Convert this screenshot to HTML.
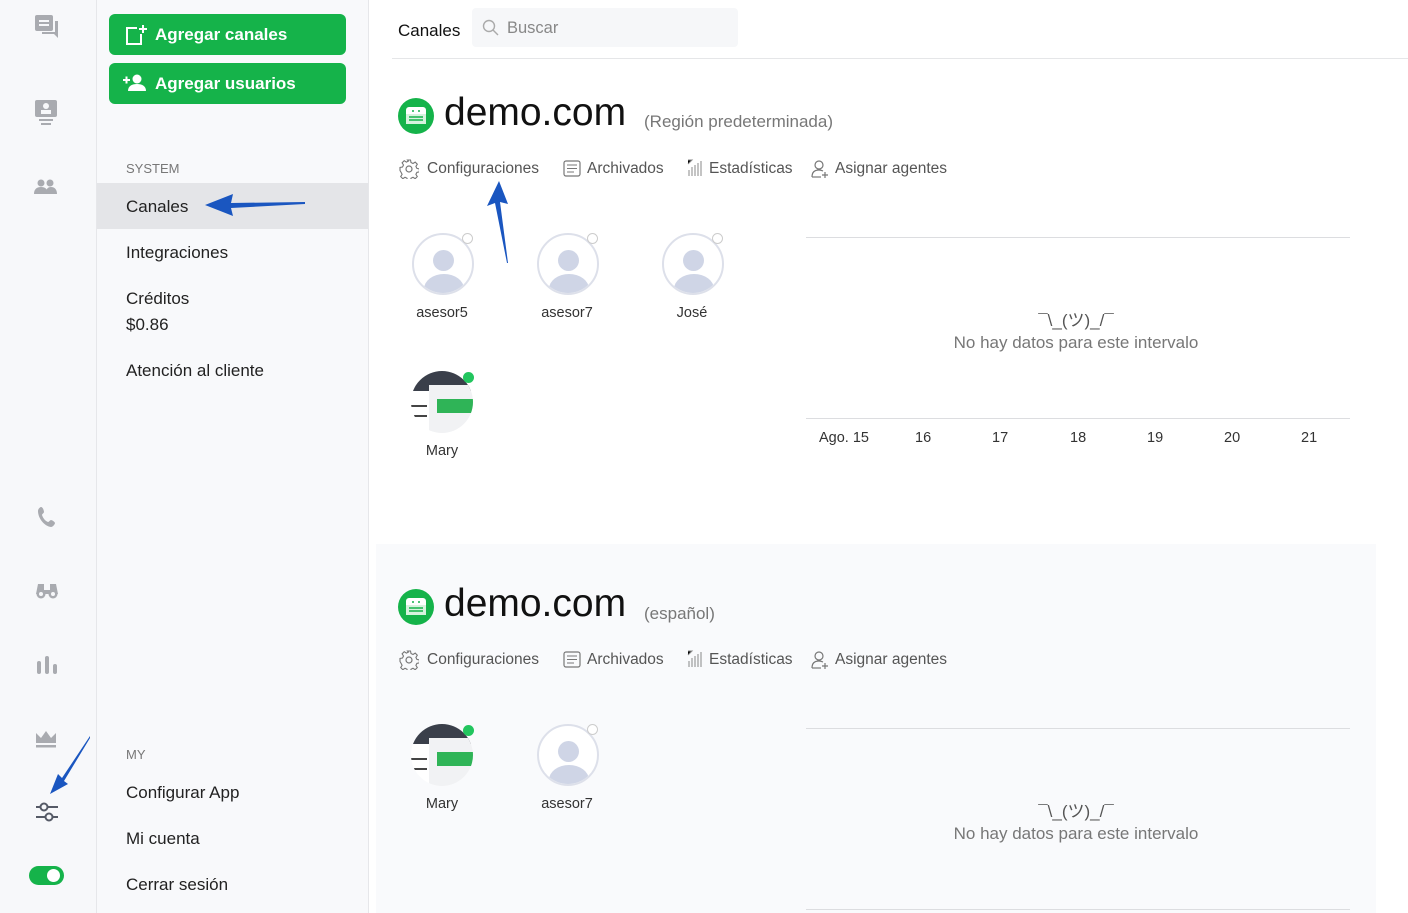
<!DOCTYPE html>
<html><head><meta charset="utf-8"><style>
*{box-sizing:border-box;margin:0;padding:0}
body{width:1408px;height:913px;overflow:hidden;background:#fff;font-family:"Liberation Sans",sans-serif;position:relative;color:#222}
.rail{position:absolute;left:0;top:0;width:97px;height:913px;background:#f7f8fa;border-right:1px solid #e6e7ea}
.menu{position:absolute;left:97px;top:0;width:272px;height:913px;background:#f8f9fb;border-right:1px solid #e6e7ea}
.btn{position:absolute;left:12px;width:237px;height:41px;background:#15b34a;border-radius:6px;color:#fff;font-weight:bold;font-size:17px;line-height:41px;padding-left:46px}
.sec{position:absolute;left:29px;font-size:13px;color:#777}
.item{position:absolute;left:29px;font-size:17px;color:#222}
.abs{position:absolute}
.ic{position:absolute;left:34px}
.title{font-size:39px;color:#111}
.sub{font-size:17px;color:#777}
.acts{position:absolute;font-size:15.5px;color:#555;display:flex;gap:0}
.acts span{position:absolute;white-space:nowrap}
.av{position:absolute;width:62px;height:62px;border-radius:50%;border:2px solid #dde0ea;background:#fff;overflow:hidden}
.av .h{position:absolute;left:19px;top:15px;width:21px;height:21px;border-radius:50%;background:#cfd5e6}
.av .b{position:absolute;left:10px;top:39px;width:40px;height:30px;border-radius:50%;background:#cfd5e6}
.dot{position:absolute;width:11px;height:11px;border-radius:50%;border:1px solid #ccc;background:#fff}
.gdot{position:absolute;width:11px;height:11px;border-radius:50%;background:#22c55e}
.nm{position:absolute;font-size:14.5px;color:#333;width:80px;text-align:center}
.mary{position:absolute;width:62px;height:62px;border-radius:50%;overflow:hidden;background:#fff}
.line{position:absolute;height:1px;background:#dcdde0}
.dx{position:absolute;font-size:14.5px;color:#333}
</style></head><body>
<div class="rail">
 <svg class="ic" style="top:14px" width="26" height="26" viewBox="0 0 26 26"><rect x="1" y="1" width="18" height="16" rx="2" fill="#a9abb0"/><rect x="5" y="6" width="10" height="2" fill="#f7f8fa"/><rect x="5" y="10" width="10" height="2" fill="#f7f8fa"/><path d="M21 7h3v17l-4-4H8v-2h13z" fill="#a9abb0"/></svg>
 <svg class="ic" style="top:99px" width="24" height="28" viewBox="0 0 24 28"><rect x="1" y="1" width="22" height="17" rx="2" fill="#a9abb0"/><circle cx="12" cy="7" r="3" fill="#f7f8fa"/><rect x="7" y="11" width="10" height="4" fill="#f7f8fa"/><rect x="5" y="20" width="14" height="2" fill="#a9abb0"/><rect x="7" y="24" width="10" height="2" fill="#a9abb0"/></svg>
 <svg class="ic" style="top:178px" width="24" height="18" viewBox="0 0 24 18"><circle cx="7" cy="5" r="3.5" fill="#a9abb0"/><circle cx="16" cy="5" r="3.5" fill="#a9abb0"/><path d="M0 16c0-5 3-7 7-7s7 2 7 7zM12 16c0-4 1-7 5-7s6 3 6 7z" fill="#a9abb0"/></svg>
 <svg class="ic" style="top:506px;left:37px" width="20" height="22" viewBox="0 0 20 22"><path d="M4 1c2 0 3 4 3 5s-2 2-2 3c1 3 3 6 6 7 1 0 2-2 3-2s4 2 4 3-2 4-4 4C7 20 1 12 1 5c0-2 2-4 3-4z" fill="#a9abb0"/></svg>
 <svg class="ic" style="top:580px;left:35px" width="24" height="20" viewBox="0 0 24 20"><path d="M3 4h6v6h6V4h6l2 10H1z" fill="#a9abb0"/><circle cx="6" cy="14" r="4.5" fill="#a9abb0"/><circle cx="18" cy="14" r="4.5" fill="#a9abb0"/><circle cx="6" cy="14" r="2" fill="#f7f8fa"/><circle cx="18" cy="14" r="2" fill="#f7f8fa"/></svg>
 <svg class="ic" style="top:655px;left:36px" width="22" height="20" viewBox="0 0 22 20"><rect x="1" y="6" width="4" height="13" rx="2" fill="#a9abb0"/><rect x="9" y="1" width="4" height="18" rx="2" fill="#a9abb0"/><rect x="17" y="9" width="4" height="10" rx="2" fill="#a9abb0"/></svg>
 <svg class="ic" style="top:730px;left:35px" width="22" height="18" viewBox="0 0 22 18"><path d="M1 3l5 5 5-7 5 7 5-5v10H1z" fill="#a9abb0"/><rect x="1" y="15" width="20" height="2.5" fill="#a9abb0"/></svg>
 <svg class="ic" style="top:801px;left:35px" width="24" height="22" viewBox="0 0 24 22"><path d="M1 6h22M1 16h22" stroke="#555a66" stroke-width="2"/><circle cx="9" cy="6" r="3.5" fill="#f7f8fa" stroke="#555a66" stroke-width="2"/><circle cx="14" cy="16" r="3.5" fill="#f7f8fa" stroke="#555a66" stroke-width="2"/></svg>
 <svg class="abs" style="left:48px;top:734px" width="44" height="62" viewBox="0 0 44 62"><path d="M42 2L14 44l-4-4-8 20 18-10-4-3L42 4z" fill="#1a56c0"/></svg>
 <div class="abs" style="left:29px;top:866px;width:35px;height:19px;border-radius:10px;background:#15b34a"><div class="abs" style="left:18px;top:3px;width:13px;height:13px;border-radius:50%;background:#fff"></div></div>
</div>
<div class="menu">
 <div class="btn" style="top:14px"><svg class="abs" style="left:16px;top:10px" width="22" height="22" viewBox="0 0 22 22"><path d="M12 4H2v16h14V10" fill="none" stroke="#fff" stroke-width="2"/><path d="M18 1v8M14 5h8" stroke="#fff" stroke-width="2"/></svg>Agregar canales</div>
 <div class="btn" style="top:63px"><svg class="abs" style="left:13px;top:11px" width="26" height="18" viewBox="0 0 26 18"><path d="M1 6h7M4.5 2.5v7" stroke="#fff" stroke-width="2"/><circle cx="15" cy="5" r="4.5" fill="#fff"/><path d="M6 17c0-5 4-7 9-7s9 2 9 7z" fill="#fff"/></svg>Agregar usuarios</div>
 <div class="sec" style="top:161px">SYSTEM</div>
 <div class="abs" style="left:0;top:183px;width:271px;height:46px;background:#e4e5e8"></div>
 <div class="item" style="top:197px">Canales</div>
 <svg class="abs" style="left:106px;top:192px" width="104" height="26" viewBox="0 0 104 26"><path d="M102 10L28 11l2-9L2 13l28 11-2-8 74-4z" fill="#1a56c0"/></svg>
 <div class="item" style="top:243px">Integraciones</div>
 <div class="item" style="top:289px">Créditos</div>
 <div class="item" style="top:315px">$0.86</div>
 <div class="item" style="top:361px">Atención al cliente</div>
 <div class="sec" style="top:747px">MY</div>
 <div class="item" style="top:783px">Configurar App</div>
 <div class="item" style="top:829px">Mi cuenta</div>
 <div class="item" style="top:875px">Cerrar sesión</div>
</div>

<div class="abs" style="left:398px;top:21px;font-size:17px;color:#111">Canales</div>
<div class="abs" style="left:472px;top:8px;width:266px;height:39px;background:#f6f7f9;border-radius:4px;font-size:16.5px;color:#888;line-height:41px;padding-left:35px">Buscar<svg class="abs" style="left:10px;top:11px" width="18" height="18" viewBox="0 0 18 18"><circle cx="7" cy="7" r="5.5" fill="none" stroke="#aaa" stroke-width="1.4"/><path d="M11 11l5 5" stroke="#aaa" stroke-width="1.4"/></svg></div>
<div class="line" style="left:392px;top:58px;width:1016px;background:#e5e6e8"></div>

<div class="abs" style="left:376px;top:544px;width:1000px;height:369px;background:#f9fafc"></div>

<!-- card 1 -->
<svg class="abs" style="left:398px;top:98px" width="36" height="36" viewBox="0 0 36 36"><circle cx="18" cy="18" r="18" fill="#15b34a"/><rect x="8" y="9" width="20" height="17" rx="3" fill="#fff"/><rect x="8" y="16" width="20" height="10" fill="#d7f3de"/><path d="M11 19h14M11 22h14" stroke="#15b34a" stroke-width="1.5"/><circle cx="15" cy="13" r="1" fill="#15b34a"/><circle cx="21" cy="13" r="1" fill="#15b34a"/></svg>
<div class="abs title" style="left:444px;top:91px">demo.com</div>
<div class="abs sub" style="left:644px;top:112px">(Región predeterminada)</div>

<div class="acts" style="left:0;top:0">
</div>
<div id="a1"></div>

<!-- action rows -->
<div class="abs" style="left:398px;top:158px;width:560px;height:22px;font-size:15.5px;color:#555">
 <svg class="abs" style="left:1px;top:1px" width="20" height="20" viewBox="0 0 20 20"><circle cx="10" cy="10" r="3" fill="none" stroke="#777" stroke-width="1.2"/><path d="M8.5 1h3l.5 2.5 2 1 2.2-1.4 2.1 2.1-1.4 2.2 1 2 2.5.5v3l-2.5.5-1 2 1.4 2.2-2.1 2.1-2.2-1.4-2 1-.5 2.5h-3l-.5-2.5-2-1-2.2 1.4-2.1-2.1 1.4-2.2-1-2L1 11.5v-3l2.5-.5 1-2-1.4-2.2 2.1-2.1 2.2 1.4 2-1z" fill="none" stroke="#777" stroke-width="1.1"/></svg>
 <span class="abs" style="left:29px;top:2px">Configuraciones</span>
 <svg class="abs" style="left:165px;top:2px" width="18" height="17" viewBox="0 0 18 17"><rect x="1" y="1" width="16" height="15" rx="2" fill="none" stroke="#777" stroke-width="1.2"/><path d="M4 5h10M4 8.5h10M4 12h7" stroke="#777" stroke-width="1.1"/></svg>
 <span class="abs" style="left:189px;top:2px">Archivados</span>
 <svg class="abs" style="left:288px;top:1px" width="17" height="18" viewBox="0 0 17 18"><path d="M2 1h4L2 5M6 8v9M9 6v11M12 4v13M15 2v15M3 11v6" stroke="#888" stroke-width="1"/></svg>
 <span class="abs" style="left:311px;top:2px">Estadísticas</span>
 <svg class="abs" style="left:413px;top:1px" width="18" height="20" viewBox="0 0 18 20"><circle cx="8" cy="6" r="4" fill="none" stroke="#777" stroke-width="1.2"/><path d="M1 18c0-5 3-7 7-7 2 0 3 .5 4 1" fill="none" stroke="#777" stroke-width="1.2"/><path d="M14 13v6M11 16h6" stroke="#777" stroke-width="1.2"/><path d="M1 18h9" stroke="#777" stroke-width="1.2"/></svg>
 <span class="abs" style="left:437px;top:2px">Asignar agentes</span>
</div>
<svg class="abs" style="left:484px;top:180px" width="30" height="84" viewBox="0 0 30 84"><path d="M15 1L3 26l8-3 12 60 1 0-8-61 8 2z" fill="#1a56c0"/></svg>

<div class="av" style="left:412px;top:233px"><div class="h"></div><div class="b"></div></div><div class="dot" style="left:462px;top:233px"></div><div class="nm" style="left:402px;top:305px">asesor5</div>
<div class="av" style="left:537px;top:233px"><div class="h"></div><div class="b"></div></div><div class="dot" style="left:587px;top:233px"></div><div class="nm" style="left:527px;top:305px">asesor7</div>
<div class="av" style="left:662px;top:233px"><div class="h"></div><div class="b"></div></div><div class="dot" style="left:712px;top:233px"></div><div class="nm" style="left:652px;top:305px">José</div>

<div class="mary" style="left:411px;top:371px"><div class="abs" style="left:0;top:0;width:62px;height:20px;background:#3a3f4a"></div><div class="abs" style="left:18px;top:14px;width:44px;height:48px;background:#f1f2f4"></div><div class="abs" style="left:26px;top:28px;width:36px;height:14px;background:#2fb457"></div><div class="abs" style="left:0;top:34px;width:16px;height:2px;background:#444"></div><div class="abs" style="left:0;top:44px;width:16px;height:2px;background:#444"></div></div><div class="gdot" style="left:463px;top:372px"></div>
<div class="nm" style="left:402px;top:443px">Mary</div>

<div class="line" style="left:806px;top:237px;width:544px"></div>
<div class="abs" style="left:806px;top:306px;width:540px;text-align:center;font-size:17px;color:#555">¯\_(ツ)_/¯</div>
<div class="abs" style="left:806px;top:333px;width:540px;text-align:center;font-size:17px;color:#777">No hay datos para este intervalo</div>
<div class="line" style="left:806px;top:418px;width:544px"></div>
<div class="dx" style="left:819px;top:430px">Ago. 15</div>
<div class="dx" style="left:915px;top:430px">16</div>
<div class="dx" style="left:992px;top:430px">17</div>
<div class="dx" style="left:1070px;top:430px">18</div>
<div class="dx" style="left:1147px;top:430px">19</div>
<div class="dx" style="left:1224px;top:430px">20</div>
<div class="dx" style="left:1301px;top:430px">21</div>

<!-- card 2 -->
<svg class="abs" style="left:398px;top:589px" width="36" height="36" viewBox="0 0 36 36"><circle cx="18" cy="18" r="18" fill="#15b34a"/><rect x="8" y="9" width="20" height="17" rx="3" fill="#fff"/><rect x="8" y="16" width="20" height="10" fill="#d7f3de"/><path d="M11 19h14M11 22h14" stroke="#15b34a" stroke-width="1.5"/><circle cx="15" cy="13" r="1" fill="#15b34a"/><circle cx="21" cy="13" r="1" fill="#15b34a"/></svg>
<div class="abs title" style="left:444px;top:582px">demo.com</div>
<div class="abs sub" style="left:644px;top:604px">(español)</div>

<div class="abs" style="left:398px;top:649px;width:560px;height:22px;font-size:15.5px;color:#555">
 <svg class="abs" style="left:1px;top:1px" width="20" height="20" viewBox="0 0 20 20"><circle cx="10" cy="10" r="3" fill="none" stroke="#777" stroke-width="1.2"/><path d="M8.5 1h3l.5 2.5 2 1 2.2-1.4 2.1 2.1-1.4 2.2 1 2 2.5.5v3l-2.5.5-1 2 1.4 2.2-2.1 2.1-2.2-1.4-2 1-.5 2.5h-3l-.5-2.5-2-1-2.2 1.4-2.1-2.1 1.4-2.2-1-2L1 11.5v-3l2.5-.5 1-2-1.4-2.2 2.1-2.1 2.2 1.4 2-1z" fill="none" stroke="#777" stroke-width="1.1"/></svg>
 <span class="abs" style="left:29px;top:2px">Configuraciones</span>
 <svg class="abs" style="left:165px;top:2px" width="18" height="17" viewBox="0 0 18 17"><rect x="1" y="1" width="16" height="15" rx="2" fill="none" stroke="#777" stroke-width="1.2"/><path d="M4 5h10M4 8.5h10M4 12h7" stroke="#777" stroke-width="1.1"/></svg>
 <span class="abs" style="left:189px;top:2px">Archivados</span>
 <svg class="abs" style="left:288px;top:1px" width="17" height="18" viewBox="0 0 17 18"><path d="M2 1h4L2 5M6 8v9M9 6v11M12 4v13M15 2v15M3 11v6" stroke="#888" stroke-width="1"/></svg>
 <span class="abs" style="left:311px;top:2px">Estadísticas</span>
 <svg class="abs" style="left:413px;top:1px" width="18" height="20" viewBox="0 0 18 20"><circle cx="8" cy="6" r="4" fill="none" stroke="#777" stroke-width="1.2"/><path d="M1 18c0-5 3-7 7-7 2 0 3 .5 4 1" fill="none" stroke="#777" stroke-width="1.2"/><path d="M14 13v6M11 16h6" stroke="#777" stroke-width="1.2"/><path d="M1 18h9" stroke="#777" stroke-width="1.2"/></svg>
 <span class="abs" style="left:437px;top:2px">Asignar agentes</span>
</div>

<div class="mary" style="left:411px;top:724px"><div class="abs" style="left:0;top:0;width:62px;height:20px;background:#3a3f4a"></div><div class="abs" style="left:18px;top:14px;width:44px;height:48px;background:#f1f2f4"></div><div class="abs" style="left:26px;top:28px;width:36px;height:14px;background:#2fb457"></div><div class="abs" style="left:0;top:34px;width:16px;height:2px;background:#444"></div><div class="abs" style="left:0;top:44px;width:16px;height:2px;background:#444"></div></div><div class="gdot" style="left:463px;top:725px"></div>
<div class="nm" style="left:402px;top:796px">Mary</div>
<div class="av" style="left:537px;top:724px"><div class="h"></div><div class="b"></div></div><div class="dot" style="left:587px;top:724px"></div><div class="nm" style="left:527px;top:796px">asesor7</div>

<div class="line" style="left:806px;top:728px;width:544px"></div>
<div class="abs" style="left:806px;top:797px;width:540px;text-align:center;font-size:17px;color:#555">¯\_(ツ)_/¯</div>
<div class="abs" style="left:806px;top:824px;width:540px;text-align:center;font-size:17px;color:#777">No hay datos para este intervalo</div>
<div class="line" style="left:806px;top:909px;width:544px"></div>
</body></html>
